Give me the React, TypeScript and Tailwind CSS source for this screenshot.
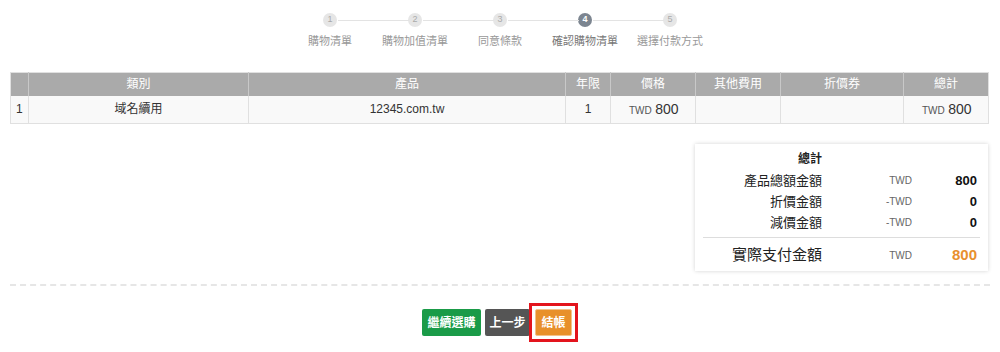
import React from "react";

const steps = ["購物清單", "購物加值清單", "同意條款", "確認購物清單", "選擇付款方式"];
const active = 3;

const font = { fontFamily: '"Liberation Sans", "Noto Sans CJK TC", sans-serif' };

const Stepper = () => (
  <div className="flex justify-center pt-[13px]">
    {steps.map((s, i) => (
      <div key={s} className="relative flex w-[85px] flex-col items-center">
        {i > 0 && <div className="absolute top-[7px] right-[49px] h-px w-[71px] bg-[#e3e3e3]" />}
        <div
          className={
            i === active
              ? "flex h-[14px] w-[14px] items-center justify-center rounded-full bg-[#7c8590] text-[9px] font-bold text-white"
              : "flex h-[14px] w-[14px] items-center justify-center rounded-full bg-[#e6e6e6] text-[9px] text-[#aaa]"
          }
        >
          {i + 1}
        </div>
        <div className={i === active ? "mt-[6px] text-[11px] leading-[16px] text-[#777]" : "mt-[6px] text-[11px] leading-[16px] text-[#999]"}>
          {s}
        </div>
      </div>
    ))}
  </div>
);

const th = "border-r border-[#c8c8c8] font-normal last:border-r-0";
const td = "border-r border-[#e0e0e0] last:border-r-0";

const Table = () => (
  <table className="mx-[10px] mt-[23px] w-[978px] table-fixed border-collapse border border-[#e0e0e0] text-[12px]">
    <colgroup>
      <col className="w-[18px]" />
      <col className="w-[220px]" />
      <col className="w-[317px]" />
      <col className="w-[45px]" />
      <col className="w-[85px]" />
      <col className="w-[85px]" />
      <col className="w-[123px]" />
      <col className="w-[85px]" />
    </colgroup>
    <thead>
      <tr className="h-[23px] bg-[#aaaaaa] text-white">
        <th className={th}></th>
        <th className={th}>類別</th>
        <th className={th}>產品</th>
        <th className={th}>年限</th>
        <th className={th}>價格</th>
        <th className={th}>其他費用</th>
        <th className={th}>折價券</th>
        <th className={th}>總計</th>
      </tr>
    </thead>
    <tbody>
      <tr className="h-[28px] bg-[#f9f9f9] text-center text-[#333]">
        <td className={td + " text-left pl-[5px]"}>1</td>
        <td className={td}>域名續用</td>
        <td className={td}>12345.com.tw</td>
        <td className={td}>1</td>
        <td className={td + " text-left pl-[18px]"}>
          <span className="text-[10px] text-[#555]">TWD</span> <span className="text-[14px]">800</span>
        </td>
        <td className={td}></td>
        <td className={td}></td>
        <td className={td + " text-left pl-[18px]"}>
          <span className="text-[10px] text-[#555]">TWD</span> <span className="text-[14px]">800</span>
        </td>
      </tr>
    </tbody>
  </table>
);

const Row = ({ label, cur, val }: { label: string; cur: string; val: string }) => (
  <div className="grid h-[21px] grid-cols-[127px_90px_65px] items-center">
    <div className="text-right text-[13px] text-[#222]">{label}</div>
    <div className="text-right text-[10px] text-[#666]">{cur}</div>
    <div className="text-right text-[13px] font-bold text-[#111]">{val}</div>
  </div>
);

const Summary = () => (
  <div className="mt-[20px] mr-[12px] flex justify-end">
    <div className="h-[127px] w-[293px] bg-white pt-[6px] shadow-[0_0_4px_rgba(0,0,0,0.18)]">
      <div className="w-[127px] text-right text-[12px] font-bold leading-[18px] text-[#222]">總計</div>
      <div className="mt-[2px]">
        <Row label="產品總額金額" cur="TWD" val="800" />
        <Row label="折價金額" cur="-TWD" val="0" />
        <Row label="減價金額" cur="-TWD" val="0" />
      </div>
      <div className="mx-[8px] mt-[4px] h-px bg-[#ddd]" />
      <div className="grid h-[34px] grid-cols-[127px_90px_65px] items-center">
        <div className="text-right text-[15px] text-[#222]">實際支付金額</div>
        <div className="text-right text-[10px] text-[#666]">TWD</div>
        <div className="text-right text-[15px] font-bold text-[#e8902e]">800</div>
      </div>
    </div>
  </div>
);

export default function App() {
  return (
    <div className="h-[352px] w-[1000px] bg-white" style={font}>
      <Stepper />
      <Table />
      <Summary />
      <div className="mx-[10px] mt-[13px] border-t-2 border-dashed border-[#e6e6e6]" />
      <div className="mt-[17px] flex items-center justify-center">
        <button className="h-[27px] w-[59px] rounded-[2px] bg-[#1a9b48] text-[12px] font-bold text-white">繼續選購</button>
        <button className="ml-[4px] h-[27px] w-[45px] rounded-[2px] bg-[#555555] text-[12px] font-bold text-white">上一步</button>
        <div className="-ml-px border-[3px] border-[#e3141d] p-[3px]">
          <button className="block h-[27px] w-[37px] rounded-[2px] border border-[#f3c18a] bg-[#e8902a] text-[12px] font-bold text-white">結帳</button>
        </div>
      </div>
    </div>
  );
}
